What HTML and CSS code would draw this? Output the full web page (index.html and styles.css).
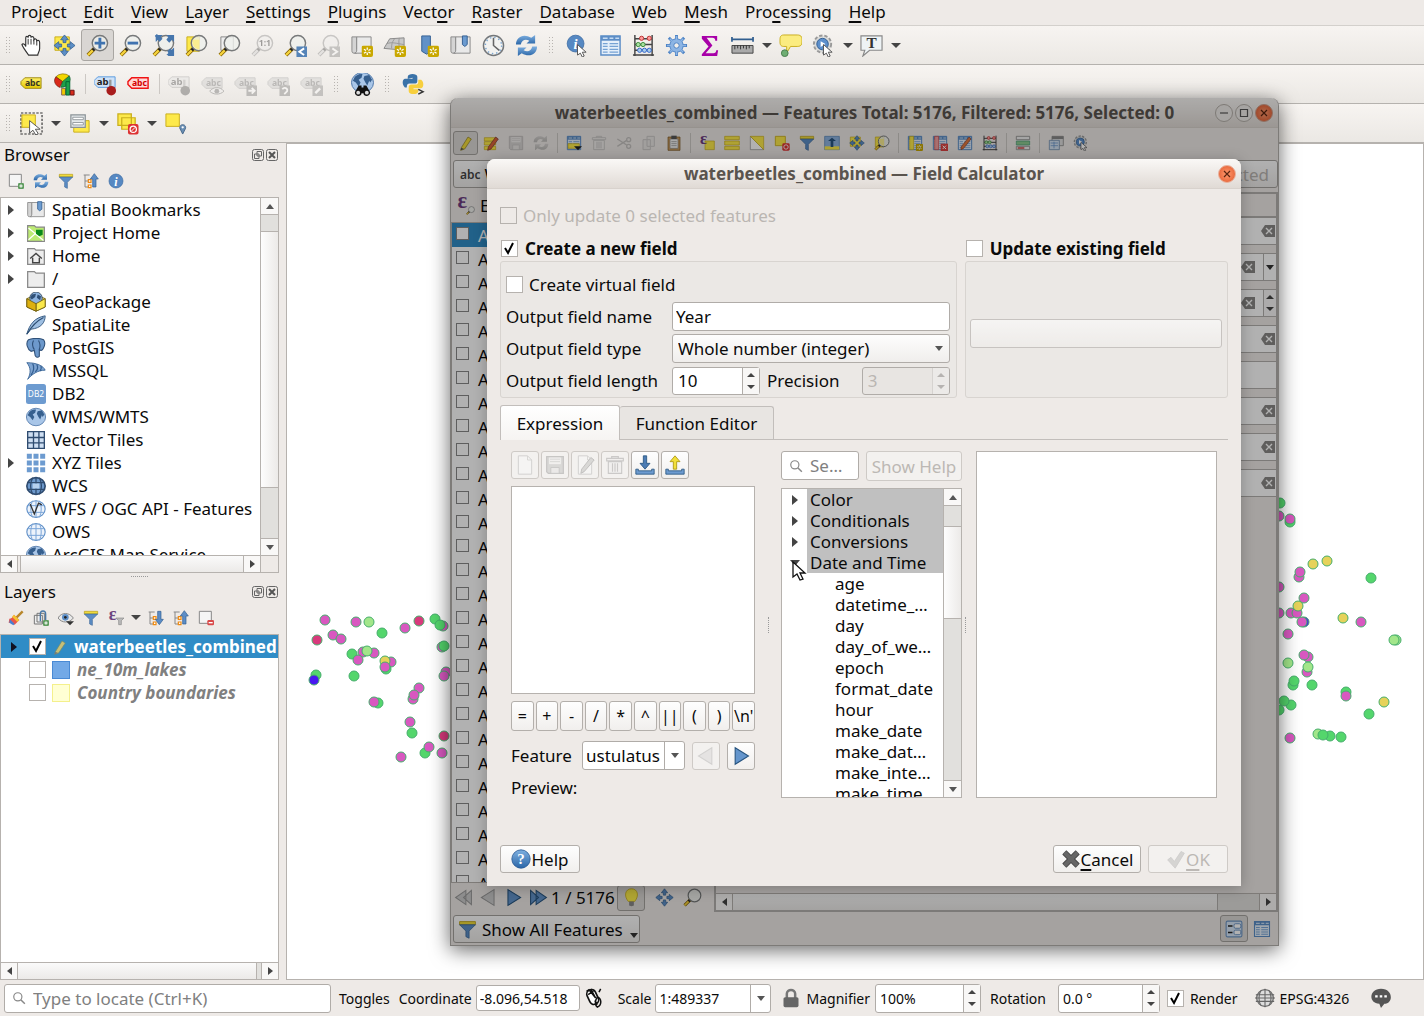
FILE: index.html
```html
<!DOCTYPE html>
<html lang="en">
<head>
<meta charset="utf-8">
<title>QGIS</title>
<link rel="stylesheet" href="styles.css">
</head>
<body>
<svg class="paints" aria-hidden="true">
  <defs>
    <linearGradient id="gold" x1="0" y1="0" x2="0" y2="1"><stop offset="0" stop-color="#fff06a"/><stop offset="1" stop-color="#e3c800"/></linearGradient>
    <linearGradient id="blue" x1="0" y1="0" x2="0" y2="1"><stop offset="0" stop-color="#7fb0e0"/><stop offset="1" stop-color="#2a66a8"/></linearGradient>
    <radialGradient id="orange"><stop offset="0" stop-color="#ff9a70"/><stop offset="1" stop-color="#e8683c"/></radialGradient>
  </defs>
</svg>
<svg class="sprite" aria-hidden="true">
  <symbol id="lens" viewBox="0 0 24 24"><path d="M2 22l7-7" stroke="#7a5a00" stroke-width="4"/><path d="M2 22l6-6" stroke="#f5d23c" stroke-width="2.4"/><path d="M7 17l2.500-2.500" stroke="#222" stroke-width="3"/><circle cx="14.500" cy="9.500" r="8" fill="#eef0ec" fill-opacity=".8" stroke="#77797a" stroke-width="1.500"/></symbol>
  <symbol id="arrows" viewBox="0 0 24 24"><path d="M12 1l4 5h-2.500v3h-3V6H8zM12 23l4-5h-2.500v-3h-3v3H8zM1 12l5-4v2.500h3v3H6V16zM23 12l-5-4v2.500h-3v3h3V16z" fill="#5c8ec6" stroke="#315e8f" stroke-width=".8"/></symbol>
  <symbol id="hand" viewBox="0 0 24 24"><path d="M9 22C6 18 3 14 2 11c1-1.500 3-.5 4 2V4c0-2 2.500-2 2.500 0V3c0-2 3-2 3 0v1c0-2 3-1.500 3 .5V6c1-1.500 3-1 3 1 1.500-1 3 0 3 2v6c0 3-2 5-2 7z" fill="#fff" stroke="#333" stroke-width="1.200"/><path d="M8.500 5v6M11.500 5v6M14.500 6v5M17.500 7v5" stroke="#333" fill="none"/></symbol>
  <symbol id="pan" viewBox="0 0 24 24"><path d="M2 3h15v14H2z" fill="#fde94a" stroke="#c9ae1c"/><use href="#arrows"/></symbol>
  <symbol id="zin" viewBox="0 0 24 24"><use href="#lens"/><path d="M9 9.500h11M14.500 4v11" stroke="#3f73b0" stroke-width="3"/></symbol>
  <symbol id="zout" viewBox="0 0 24 24"><use href="#lens"/><path d="M9 9.500h11" stroke="#3f73b0" stroke-width="3"/></symbol>
  <symbol id="zfull" viewBox="0 0 24 24"><path d="M4 1h7L4 8zM23 1v8l-8-8zM23 22h-8l8-8z" fill="#4676ad"/><path d="M4 1l4 4M22 2l-4 4M22 21l-4-4" stroke="#4676ad" stroke-width="3"/><use href="#lens"/><path d="M4 1h7L9 3l2 2-3 3-2-2-2 2zM23 1v7l-2-2-3 3-3-3 2-3-2-2zM23 23h-7l2-2-2-3 3-3 2 2 2-2z" fill="#4676ad"/></symbol>
  <symbol id="zsel" viewBox="0 0 24 24"><path d="M2 3h13v15H2z" fill="#fde94a" stroke="#c9ae1c"/><use href="#lens"/><path d="M8 6h7v10c-4 0-8-4-7-10z" fill="#fbee90"/></symbol>
  <symbol id="zlay" viewBox="0 0 24 24"><path d="M3 3h13v14H3z" fill="#eee" stroke="#888"/><use href="#lens"/></symbol>
  <symbol id="z11" viewBox="0 0 24 24"><use href="#lens"/><text x="14.500" y="13" font-size="9" font-weight="700" text-anchor="middle">1:1</text></symbol>
  <symbol id="zlast" viewBox="0 0 24 24"><use href="#lens"/><path d="M13 13h11v11H13z" fill="#5584b8"/><path d="M21 15l-5 3.500 5 3.500" stroke="#fff" stroke-width="2" fill="none"/></symbol>
  <symbol id="znext" viewBox="0 0 24 24"><use href="#lens"/><path d="M13 13h11v11H13z" fill="#777"/><path d="M16 15l5 3.500-5 3.500" stroke="#fff" stroke-width="2" fill="none"/></symbol>
  <symbol id="star" viewBox="0 0 12 12"><rect width="12" height="12" rx="2" fill="#c9a800"/><path d="M6 2v8M2.500 4l7 4M9.500 4l-7 4" stroke="#fff" stroke-width="1.300"/><circle cx="6" cy="6" r="1.500" fill="#c9a800"/></symbol>
  <symbol id="map" viewBox="0 0 24 24"><path d="M2 3h5v17H4c-2 0-2-2-2-3z" fill="#d4d4d4" stroke="#888"/><path d="M7 3h15v17H5c2-1 2-2 2-4z" fill="#e9e9e9" stroke="#888"/></symbol>
  <symbol id="newmap" viewBox="0 0 24 24"><use href="#map"/><use href="#star" x="12" y="12" width="12" height="12"/></symbol>
  <symbol id="mesh" viewBox="0 0 24 24"><path d="M1 15L7 5l15-1v13z" fill="#c8c8c8" stroke="#888"/><path d="M4 10c6-2 10 0 18 1M12 5c-3 4-3 6-3 10M17 4c-1 4 0 8 0 12" stroke="#999" fill="none"/><use href="#star" x="12" y="12" width="12" height="12"/></symbol>
  <symbol id="bmnew" viewBox="0 0 24 24"><path d="M6 2h9v17l-4 2-5-3z" fill="#6191c8" stroke="#335f92"/><use href="#star" x="12" y="12" width="12" height="12"/></symbol>
  <symbol id="bm" viewBox="0 0 24 24"><use href="#map"/><path d="M14 2h5v9l-2.500 2-2.500-2z" fill="#6b9bd0" stroke="#335f92"/></symbol>
  <symbol id="clock" viewBox="0 0 24 24"><circle cx="12" cy="12" r="10.500" fill="#f2f2f0" stroke="#74777a" stroke-width="1.500"/><circle cx="12" cy="12" r="8.500" fill="none" stroke="#7ca6d0" stroke-width="1.500" stroke-dasharray="1.500 3"/><path d="M12 4v8l6 5" stroke="#666" stroke-width="1.600" fill="none"/></symbol>
  <symbol id="refresh" viewBox="0 0 24 24"><path d="M1 11C1 3 9-1 17 4l4-3v9h-9l3-3c-4-2-8-1-9 4z" fill="url(#blue)"/><path d="M23 13c0 8-8 12-16 7l-4 3v-9h9l-3 3c4 2 8 1 9-4z" fill="url(#blue)"/></symbol>
  <symbol id="cursor" viewBox="0 0 24 24"><path d="M12 11v11l3-2 2 4 2-1-2-4h4z" fill="#fff" stroke="#555"/></symbol>
  <symbol id="info" viewBox="0 0 24 24"><circle cx="12" cy="12" r="10.500" fill="#5688c2" stroke="#3a6aa2"/><text x="12" y="19" font-size="18" font-style="italic" font-weight="700" text-anchor="middle" font-family="Liberation Serif, serif" fill="#fff">i</text></symbol>
  <symbol id="ident" viewBox="0 0 24 24"><use href="#info" width="20" height="20"/><use href="#cursor"/></symbol>
  <symbol id="table" viewBox="0 0 24 24"><path d="M2 2h20v20H2z" fill="#e5effa" stroke="#5c8dc6" stroke-width="1.500"/><path d="M2 2h20v5H2z" fill="#5c8dc6"/><path d="M4 4.500h5M11 4.500h4M17 4.500h4" stroke="#c5dbf2" stroke-width="1.500"/><path d="M4 10h5M4 13h5M4 16h5M4 19h5M11 10h9M11 13h9M11 16h9M11 19h9" stroke="#76a2d4" stroke-width="1.300"/></symbol>
  <symbol id="abacus" viewBox="0 0 24 24"><path d="M3 1v22M21 1v22M1 22h22M3 5h18M3 11h18M3 17h18" stroke="#444" stroke-width="1.500" fill="none"/><g stroke-width="1"><g fill="#ff9a9a" stroke="#b33"><circle cx="10" cy="4.500" r="2.200"/><circle cx="18" cy="4.500" r="2.200"/></g><g fill="#a8e0a0" stroke="#3a8a3a"><circle cx="6.500" cy="11" r="2.200"/><circle cx="11.500" cy="11" r="2.200"/></g><g fill="#a8cce8" stroke="#36c"><circle cx="8" cy="17" r="2.200"/><circle cx="13" cy="17" r="2.200"/><circle cx="18" cy="17" r="2.200"/></g></g></symbol>
  <symbol id="gear" viewBox="0 0 24 24"><path d="M12 1v22M1 12h22M4 4l16 16M20 4L4 20" stroke="#4c82c4" stroke-width="3"/><circle cx="12" cy="12" r="7" fill="#8db5e4" stroke="#4c82c4"/><path d="M12 2v20M2 12h20M5 5l14 14M19 5L5 19" stroke="#8db5e4" stroke-width="1.600"/><circle cx="12" cy="12" r="2.800" fill="#f1eeea" stroke="#4c82c4"/></symbol>
  <symbol id="sigma" viewBox="0 0 24 24"><path d="M4 2h16v5h-2c0-2-1-3-3-3H9l6 8-7 8h8c2 0 3-1 3-3h2l-1 6H4v-2l7-8-7-8z" fill="#a800a8"/></symbol>
  <symbol id="measure" viewBox="0 0 24 24"><path d="M1 5.500h22M1 3v5M23 3v5" stroke="#315e8f" stroke-width="1.800"/><path d="M1 12h22v8H1z" fill="#aaa" stroke="#444"/><path d="M4 12v4M7 12v3M10 12v4M13 12v3M16 12v4M19 12v3" stroke="#333"/></symbol>
  <symbol id="tip" viewBox="0 0 24 24"><path d="M5 1h14c5 0 5 3 5 6s0 6-5 6h-7l-4 7v-7H5c-4 0-4-3-4-6s0-6 4-6z" fill="#fbec80" stroke="#c9ae1c"/><circle cx="6" cy="20" r="3.500" fill="#6fae73" stroke="#4a7c4e"/></symbol>
  <symbol id="action" viewBox="0 0 24 24"><circle cx="11" cy="10.500" r="9" fill="#dcdcda" stroke="#999" stroke-width="2" stroke-dasharray="3.500 2"/><circle cx="11" cy="10.500" r="6" fill="#5c8fcc" stroke="#335f92"/><path d="M9 7.500l5 3-5 3z" fill="#fff"/><use href="#cursor"/></symbol>
  <symbol id="text" viewBox="0 0 24 24"><path d="M1 2h22v15H10l-7 6 2-6H1z" fill="#eef3f5" stroke="#888" stroke-width="1.200"/><text x="12" y="15" font-size="16" font-weight="700" text-anchor="middle" font-family="Liberation Serif, serif" fill="#333">T</text></symbol>
  <symbol id="label" viewBox="0 0 24 24"><path d="M5 5h17v11H5l-4-4V9z" fill="url(#gold)" stroke="#a08a10"/><text x="13" y="13.500" font-size="9" font-weight="700" text-anchor="middle" fill="#332">abc</text></symbol>
  <symbol id="labelpin" viewBox="0 0 24 24"><path d="M4 4h18v11H4l-4-4V8z" fill="#cfe2f7" stroke="#5a9be0"/><text x="9" y="13" font-size="10" font-weight="700" text-anchor="middle" fill="#222">ab</text><path d="M17 7v8" stroke="#999" stroke-width="2.500"/><circle cx="18" cy="18.500" r="5" fill="#a81c1c"/></symbol>
  <symbol id="labelred" viewBox="0 0 24 24"><path d="M5 5h17v11H5l-4-4V9z" fill="#ffd9d9" stroke="#f01414" stroke-width="1.500"/><text x="13" y="13.500" font-size="9" font-weight="700" text-anchor="middle" fill="#d40000">abc</text></symbol>
  <symbol id="lgrey" viewBox="0 0 24 24"><path d="M5 5h17v11H5l-4-4V9z" fill="#c8c8a8" stroke="#999980"/><text x="13" y="14" font-size="9" font-weight="700" text-anchor="middle" fill="#555">abc</text></symbol>
  <symbol id="leye" viewBox="0 0 24 24"><use href="#lgrey"/><path d="M9 19c4-5 11-5 15 0-4 4-11 4-15 0z" fill="#eee" stroke="#555"/><circle cx="16.500" cy="19" r="2.500" fill="#555"/></symbol>
  <symbol id="lmove" viewBox="0 0 24 24"><use href="#lgrey"/><path d="M13 13h11v11H13z" fill="#666"/><path d="M15 18.500h6M18.500 15.500l3 3-3 3" stroke="#fff" stroke-width="2" fill="none"/></symbol>
  <symbol id="lrot" viewBox="0 0 24 24"><use href="#lgrey"/><path d="M13 13h11v11H13z" fill="#666"/><path d="M16 17c2-3 6-1 5 2l-3 3" stroke="#fff" stroke-width="1.800" fill="none"/></symbol>
  <symbol id="ledit" viewBox="0 0 24 24"><use href="#lgrey"/><path d="M13 13h11v11H13z" fill="#776"/><path d="M16 21l5-5" stroke="#fff" stroke-width="2.500"/></symbol>
  <symbol id="diagram" viewBox="0 0 24 24"><path d="M10 9L3 4a9 7 0 0 1 14-1z" fill="#f2d600" stroke="#6b5a00" stroke-width=".6"/><path d="M10 9L3 4c-3 4-1 9 4 11z" fill="#d82a1a" stroke="#5a1000" stroke-width=".6"/><path d="M10 9l7-6c3 5-1 12-9 12z" fill="#1da04a" stroke="#0b5020" stroke-width=".6"/><path d="M9 16h4v7H9z" fill="#f2c800" stroke="#865"/><path d="M13.500 9h4v14h-4z" fill="#1da04a" stroke="#063"/><path d="M18 18h4v5h-4z" fill="#d82a1a" stroke="#611"/></symbol>
  <symbol id="globe" viewBox="0 0 24 24"><ellipse cx="12" cy="12" rx="11.500" ry="10.500" fill="#a9c6e8" stroke="#4f77a8"/><path d="M4 6c3-3 6-3 8-3l-1 4-3 2 2 3-2 4-3-4-3-2zM14 5l5-1 3 5-2 3-1-2-2 5-2-3-2-4z" fill="#365f8e"/></symbol>
  <symbol id="binoc" viewBox="0 0 24 24"><use href="#globe" y="-2"/><path d="M8 13h3v2h2v-2h3l4 7c0 5-7 5-7 1h-2c0 4-7 4-7-1z" fill="#111"/><circle cx="7.500" cy="20.500" r="2" fill="#ddd"/><circle cx="16.500" cy="20.500" r="2" fill="#ddd"/></symbol>
  <symbol id="python" viewBox="0 0 24 24"><path d="M6 6V4c0-4 10-4 10 0v4c0 3-2 3-4 3H8c-2 0-3 1-3 4H3c-3-3-3-8 0-9h8V5z" fill="#3a72a8"/><path d="M17 7h3c3 2 3 8 0 9h-8v1h5v2c0 4-10 4-10 0v-4c0-2 1-3 3-3h4c2 0 3-1 3-3z" fill="#f7cf3e"/><path d="M17 17l5 2.500-5 2.500" stroke="#333" stroke-width="1.500" fill="none"/></symbol>
  <symbol id="select" viewBox="0 0 24 24"><path d="M1 1h22v22H1z" fill="none" stroke="#333" stroke-width="1.200" stroke-dasharray="2.500 1.500"/><path d="M2 3h14v13H2z" fill="#fde94a" stroke="#c9ae1c"/><path d="M10 9v13l3.500-3 3 5 2.500-1.500-3-4.500h5z" fill="#fff" stroke="#555"/></symbol>
  <symbol id="selform" viewBox="0 0 24 24"><path d="M6 9h16v12H6z" fill="#fde94a" stroke="#c9ae1c"/><path d="M3 3h15v13H3z" fill="#e4e8ea" stroke="#8a9296" stroke-width="1.300"/><path d="M5 5.500h11v2.500H5zM5 11h11v2.500H5z" fill="#fff" stroke="#8a9296" stroke-width=".9"/></symbol>
  <symbol id="desel" viewBox="0 0 24 24"><path d="M2 2h14v12H2zM6 6h14v12H6z" fill="#fde94a" stroke="#c9ae1c" stroke-width="1.300"/><rect x="12.500" y="12.500" width="11" height="11" rx="2" fill="#d33"/><circle cx="18" cy="18" r="3.300" fill="none" stroke="#fff" stroke-width="1.300"/><path d="M16 20l4-4" stroke="#fff"/></symbol>
  <symbol id="selloc" viewBox="0 0 24 24"><path d="M2 2h14v13H2z" fill="#fde94a" stroke="#c9ae1c"/><path d="M19.500 23l-3-6c-1-5 7-5 6 0z" fill="#6a8fb4" stroke="#48698a"/><circle cx="19.500" cy="16" r="1.200" fill="#fff"/></symbol>
  <symbol id="addlay" viewBox="0 0 24 24"><path d="M2 2h18v18H2z" fill="#f5f5f5" stroke="#888" stroke-width="1.500"/><rect x="15" y="15" width="9" height="9" rx="2" fill="#5f9c5f"/><path d="M19.500 17v5M17 19.500h5" stroke="#fff" stroke-width="1.500"/></symbol>
  <symbol id="remlay" viewBox="0 0 24 24"><path d="M2 2h18v18H2z" fill="#f5f5f5" stroke="#888" stroke-width="1.500"/><rect x="14" y="15" width="10" height="8" rx="2" fill="#d84848"/><path d="M16 19h6" stroke="#fff" stroke-width="2"/></symbol>
  <symbol id="funnel" viewBox="0 0 24 24"><path d="M2 2h20v4H2z" fill="#f0dc3a" stroke="#b89c10"/><path d="M2 6h20l-8 8v9l-4-2v-7z" fill="#5c8dc6" stroke="#3c6898"/></symbol>
  <symbol id="collapse" viewBox="0 0 24 24"><path d="M1 3h9M3 3v18h6M3 12h5" stroke="#888" stroke-width="1.500" fill="none"/><path d="M8 10h4v4H8zM8 18h4v4H8z" fill="#fff" stroke="#f08a10" stroke-width="1.800"/><path d="M17 1l6 8h-3.500v12h-5V9H11z" fill="#5c8dc6" stroke="#315e8f"/></symbol>
  <symbol id="expand" viewBox="0 0 24 24"><path d="M1 3h9M3 3v18h6M3 12h5" stroke="#888" stroke-width="1.500" fill="none"/><path d="M8 10h4v4H8zM8 18h4v4H8z" fill="#fff" stroke="#f08a10" stroke-width="1.800"/><path d="M17 22l6-8h-3.500V2h-5v12H11z" fill="#5c8dc6" stroke="#315e8f"/></symbol>
  <symbol id="brush" viewBox="0 0 24 24"><path d="M13 11l9-9" stroke="#b8862a" stroke-width="3.500"/><path d="M9 7l8 8-7 7c-2-2-6-3-9-3l1-6c3 0 5-2 7-6z" fill="#e9564a"/><path d="M9 7l8 8-3 3-8-8z" fill="#f4c430"/><path d="M3 14l7 7-2 2-6-4z" fill="#4a7fd0"/></symbol>
  <symbol id="group" viewBox="0 0 24 24"><path d="M2 8h12v13H2zM6 5h11v13H6z" fill="#eee" stroke="#777" stroke-width="1.500"/><path d="M11 17V6c0-6 8-6 8 0v13" fill="none" stroke="#4a78a8" stroke-width="2"/><rect x="15" y="15" width="9" height="9" rx="2" fill="#5f9c5f"/><path d="M19.500 17v5M17 19.500h5" stroke="#fff" stroke-width="1.500"/></symbol>
  <symbol id="eye" viewBox="0 0 24 24"><path d="M0 12c5-9 17-9 23 0-6 8-17 8-23 0z" fill="#e8e8e8" stroke="#888" stroke-width="1.500"/><circle cx="11" cy="11" r="5" fill="#5c8dc6"/><circle cx="11" cy="11" r="2" fill="#222"/><path d="M12 17h12l-6 6z" fill="#333"/></symbol>
  <symbol id="eps" viewBox="0 0 24 24"><text x="7" y="15" font-size="27" font-weight="700" text-anchor="middle" fill="#6d4580" font-family="Liberation Serif, serif">ε</text><path d="M12 12h12l-4 4v6h-4v-6z" fill="#bbb" stroke="#888"/></symbol>
  <symbol id="epslens" viewBox="0 0 24 24"><text x="7" y="15" font-size="30" font-weight="700" text-anchor="middle" fill="#6d3d80" font-family="Liberation Serif, serif">ε</text><use href="#lens" x="12" y="12" width="12" height="12"/></symbol>
  <symbol id="epssel" viewBox="0 0 24 24"><path d="M9 9h14v13H9z" fill="#fde94a" stroke="#c9ae1c"/><text x="7" y="14" font-size="25" font-weight="700" text-anchor="middle" fill="#6d3d80" font-family="Liberation Serif, serif">ε</text></symbol>
  <symbol id="home" viewBox="0 0 24 24"><path d="M2 3h8l2 2h10v17H2z" fill="#ededed" stroke="#888" stroke-width="1.500"/><path d="M5 15l7-6 7 6M8 14v6h8v-6" fill="none" stroke="#444" stroke-width="1.700"/></symbol>
  <symbol id="folder" viewBox="0 0 24 24"><path d="M2 3h8l2 2h10v17H2z" fill="#ededed" stroke="#888" stroke-width="1.500"/></symbol>
  <symbol id="phome" viewBox="0 0 24 24"><path d="M2 3h8l2 2h10v17H2z" fill="#bdea74" stroke="#888" stroke-width="1.500"/><path d="M3 6l18 15M3 20l9-8" stroke="#fff" stroke-width="1.500"/><path d="M12 8h8v6l-4 2-4-3z" fill="#0a8a1a"/></symbol>
  <symbol id="gpkg" viewBox="0 0 24 24"><path d="M1 8l11-5 11 5v10l-11 5-11-5z" fill="#f7dd5a" stroke="#6b5a10"/><circle cx="12" cy="7.500" r="7.500" fill="#8db3df" stroke="#345"/><path d="M7 3l5-1-1 4-4 3-2-2zM14 3l4 2-1 5-4-3z" fill="#2f5078"/><path d="M12 14v9l11-5V8z" fill="#fbe84a" stroke="#6b5a10"/><path d="M12 14v9L1 18V8z" fill="#ddb010" stroke="#6b5a10"/></symbol>
  <symbol id="feather" viewBox="0 0 24 24"><path d="M1 23C4 12 10 3 23 1c0 8-5 15-17 16z" fill="#9ebfe2" stroke="#3c5f86" stroke-width="1.200"/><path d="M1 23C7 13 13 7 21 3" stroke="#2c4c70" fill="none" stroke-width="1.400"/></symbol>
  <symbol id="elephant" viewBox="0 0 24 24"><path d="M3 2c5-2 14-2 18 0 4 5-1 13-3 13l-2-1v8c-2 2-4 1-5-1l-1-6-4 1C2 14-1 6 3 2z" fill="#6d99cc" stroke="#2f5078" stroke-width="1.300"/><path d="M9 3c-2 4-1 8 1 11M15 3c3 5 2 8 1 11" fill="none" stroke="#2f5078" stroke-width="1.300"/></symbol>
  <symbol id="mssql" viewBox="0 0 24 24"><path d="M1 2c12 0 20 4 22 9-9 0-16 5-21 11 4-7 4-14-1-20z" fill="#7fa5d2" stroke="#335f92"/><path d="M8 3c3 6 1 10-2 14M13 4c2 5 1 7-2 9M18 6c1 3 0 4-1 6" fill="none" stroke="#335f92" stroke-width="1.500"/></symbol>
  <symbol id="db2" viewBox="0 0 24 24"><rect width="24" height="24" rx="3" fill="#6d9bd0"/><text x="12" y="15" font-size="10" text-anchor="middle" fill="#fff">DB2</text></symbol>
  <symbol id="vtiles" viewBox="0 0 24 24"><path d="M2 2h20v20H2z" fill="#cfdff2"/><path d="M2 2h20v20H2zM2 9h20M2 15.500h20M9 2v20M15.500 2v20" fill="none" stroke="#2f4c70" stroke-width="1.600"/></symbol>
  <symbol id="xyz" viewBox="0 0 24 24"><path d="M1 1h6v6H1zM9 1h6v6H9zM17 1h6v6h-6zM1 9h6v6H1zM9 9h6v6H9zM17 9h6v6h-6zM1 17h6v6H1zM9 17h6v6H9zM17 17h6v6h-6z" fill="#6d9bd0"/></symbol>
  <symbol id="wcs" viewBox="0 0 24 24"><ellipse cx="12" cy="12" rx="11" ry="10" fill="#6d99cc" stroke="#2f4c70" stroke-width="2"/><path d="M2 8h20M2 16h20M12 2v20M8 2c-3 6-3 14 0 20M16 2c3 6 3 14 0 20" fill="none" stroke="#2f4c70" stroke-width="1.500"/><path d="M8 9h8v6H8z" fill="#b5d0ee"/></symbol>
  <symbol id="ows" viewBox="0 0 24 24"><ellipse cx="12" cy="12" rx="11" ry="10" fill="#edf3fb" stroke="#5c8dc6" stroke-width="1.300"/><path d="M2 8h20M2 16h20M12 2v20M8 2c-3 6-3 14 0 20M16 2c3 6 3 14 0 20" fill="none" stroke="#7ba5d8" stroke-width="1.200"/></symbol>
  <symbol id="wfs" viewBox="0 0 24 24"><use href="#ows"/><path d="M5 6l5 12 5-13 4 2" fill="none" stroke="#333" stroke-width="1.600"/></symbol>
  <symbol id="pencil" viewBox="0 0 24 24"><path d="M5 19L15 3l5 3L10 21l-6 2z" fill="#f2dc3c" stroke="#8a7a20"/><path d="M4 23l1-4 4 2z" fill="#555"/></symbol>
  <symbol id="layerpencil" viewBox="0 0 24 24"><path d="M5 19L15 3l5 3L10 21l-6 2z" fill="#c6bf78" stroke="#6f8a6a"/><path d="M4 23l1-4 4 2z" fill="#777"/></symbol>
  <symbol id="multi" viewBox="0 0 24 24"><path d="M2 4h17v5H2zM2 10h17v5H2zM2 17h17v5H2z" fill="#fde94a" stroke="#c9ae1c"/><path d="M8 18L19 3l4 3-11 15-5 2z" fill="#d8643c" stroke="#733"/></symbol>
  <symbol id="save" viewBox="0 0 24 24"><path d="M2 2h20v20H4l-2-2z" fill="#aaa" stroke="#777" stroke-width="1.500"/><path d="M5 3h14v8H5z" fill="#eee"/><path d="M7 15h10v7H7z" fill="#ddd" stroke="#777"/><path d="M6 5h12M6 8h12" stroke="#999"/></symbol>
  <symbol id="tabadd" viewBox="0 0 24 24"><use href="#table"/><path d="M3 13h17v7H3z" fill="#fde94a" stroke="#c9ae1c"/><path d="M12 17h12l-6 6z" fill="#222"/></symbol>
  <symbol id="trash" viewBox="0 0 24 24"><path d="M2 4h20v3H2zM8 4V2h8v2M4 8h16v14H4zM9 10v10M12 10v10M15 10v10" fill="#f4eded" stroke="#a77" stroke-width="1.400"/></symbol>
  <symbol id="cut" viewBox="0 0 24 24"><path d="M2 6l14 9M2 17l14-9" stroke="#777" stroke-width="2"/><circle cx="19" cy="7" r="3" fill="none" stroke="#777" stroke-width="2"/><circle cx="19" cy="17" r="3" fill="none" stroke="#777" stroke-width="2"/></symbol>
  <symbol id="copy" viewBox="0 0 24 24"><path d="M3 7h11v15H3zM9 2h11v15H9z" fill="#ddd" stroke="#888" stroke-width="1.500"/></symbol>
  <symbol id="paste" viewBox="0 0 24 24"><path d="M3 3h18v20H3z" fill="#c99b60" stroke="#7a5520"/><path d="M6 6h12v14H6z" fill="#f4f4f4" stroke="#888"/><path d="M8 1h8v5H8z" fill="#555"/><path d="M8 10h8M8 13h8M8 16h8" stroke="#888"/></symbol>
  <symbol id="selall" viewBox="0 0 24 24"><path d="M1 2h22v5H1zM1 9h22v6H1zM1 17h22v5H1z" fill="#fde94a" stroke="#c9ae1c"/></symbol>
  <symbol id="invert" viewBox="0 0 24 24"><path d="M2 2v20h20z" fill="#fff" stroke="#888"/><path d="M2 2h20v20z" fill="#fde94a" stroke="#c9ae1c"/></symbol>
  <symbol id="desel1" viewBox="0 0 24 24"><path d="M2 2h15v14H2z" fill="#fde94a" stroke="#c9ae1c" stroke-width="1.300"/><rect x="12.500" y="12.500" width="11" height="11" rx="2" fill="#d33"/><circle cx="18" cy="18" r="3.300" fill="none" stroke="#fff" stroke-width="1.300"/></symbol>
  <symbol id="totop" viewBox="0 0 24 24"><path d="M1 2h22v20H1z" fill="#8db3df" stroke="#4c7cb4"/><path d="M1 17h22v5H1z" fill="#fde94a"/><path d="M12 4l6 5h-4v9h-4V9H6z" fill="#27547f"/></symbol>
  <symbol id="colnew" viewBox="0 0 24 24"><use href="#table"/><path d="M4 2h6v20H4z" fill="#fde94a" stroke="#c9ae1c"/><use href="#star" x="13" y="13" width="11" height="11"/></symbol>
  <symbol id="coldel" viewBox="0 0 24 24"><use href="#table"/><path d="M4 2h6v20H4z" fill="#f4a0a0" stroke="#c44"/><path d="M13 13h11v11H13z" fill="#d44"/><path d="M16 16l5 5M21 16l-5 5" stroke="#fff" stroke-width="1.500"/></symbol>
  <symbol id="coledit" viewBox="0 0 24 24"><use href="#table"/><path d="M6 18L18 3l3 3L10 20l-4 2z" fill="#e07840" stroke="#843"/></symbol>
  <symbol id="cond" viewBox="0 0 24 24"><path d="M2 2h20v5H2zM2 17h20v5H2z" fill="#eee" stroke="#777"/><path d="M2 9h20v6H2z" fill="#8cc890" stroke="#497"/><path d="M4 19.500h10" stroke="#c33" stroke-width="2"/></symbol>
  <symbol id="dock" viewBox="0 0 24 24"><path d="M6 2h17v14H6z" fill="#ddd" stroke="#777"/><path d="M6 2h17v4H6z" fill="#888"/><path d="M2 8h15v14H2z" fill="#d4e2f2" stroke="#5c7da6"/><path d="M4 12h11M4 16h11M9 10v10" stroke="#5c8dc6"/></symbol>
  <symbol id="form" viewBox="0 0 24 24"><rect x="1.500" y="1.500" width="21" height="21" rx="2" fill="#d6e5f6" stroke="#6d95c4" stroke-width="1.500"/><path d="M4 8h6M4 16.500h6" stroke="#222" stroke-width="2"/><rect x="12" y="5" width="9" height="6" rx="2" fill="#fff" stroke="#4c7cb4"/><rect x="12" y="13.500" width="9" height="6" rx="2" fill="#fff" stroke="#4c7cb4"/></symbol>
  <symbol id="page" viewBox="0 0 24 24"><path d="M4 1h11l5 5v17H4z" fill="#fbfbfb" stroke="#999" stroke-width="1.200"/><path d="M15 1v5h5" fill="none" stroke="#999"/></symbol>
  <symbol id="pageedit" viewBox="0 0 24 24"><use href="#page"/><path d="M8 17L19 3l4 3-12 14-4 2z" fill="#aaa" stroke="#555"/></symbol>
  <symbol id="import" viewBox="0 0 24 24"><path d="M10 1h4v9h4l-6 7-6-7h4z" fill="#4c7cb4" stroke="#27547f"/><path d="M1 17v6h22v-6h-3v2H4v-2z" fill="#6d9bd0" stroke="#27547f"/></symbol>
  <symbol id="export" viewBox="0 0 24 24"><path d="M10 17h4V8h4l-6-7-6 7h4z" fill="#f2e03a" stroke="#a8920c"/><path d="M1 17v6h22v-6h-3v2H4v-2z" fill="#6d9bd0" stroke="#27547f"/></symbol>
  <symbol id="next" viewBox="0 0 24 24"><path d="M5 2l16 10L5 22z" fill="#6495cc" stroke="#27547f" stroke-width="1.300"/></symbol>
  <symbol id="prev" viewBox="0 0 24 24"><path d="M19 2L3 12l16 10z" fill="#ccc" stroke="#999" stroke-width="1.300"/></symbol>
  <symbol id="last" viewBox="0 0 24 24"><path d="M2 3l10 9-10 9zM9 3l13 9-13 9z" fill="#6495cc" stroke="#27547f" stroke-width="1.300"/></symbol>
  <symbol id="first" viewBox="0 0 24 24"><path d="M22 3l-10 9 10 9zM15 3L2 12l13 9z" fill="#ccc" stroke="#999" stroke-width="1.300"/></symbol>
  <symbol id="bulb" viewBox="0 0 24 24"><path d="M8 17C2 10 4 1 12 1s10 9 4 16z" fill="#fff04a" stroke="#c9ae1c"/><path d="M9 17h6v5l-3 1-3-1z" fill="#888"/></symbol>
  <symbol id="search" viewBox="0 0 24 24"><circle cx="10" cy="10" r="7" fill="none" stroke="#888" stroke-width="2"/><path d="M15 15l7 7" stroke="#888" stroke-width="2.500"/></symbol>
  <symbol id="helpq" viewBox="0 0 24 24"><circle cx="12" cy="12" r="11" fill="url(#blue)" stroke="#2a5c96"/><text x="12" y="18.500" font-size="18" font-weight="700" text-anchor="middle" font-family="Liberation Serif, serif" fill="#fff">?</text></symbol>
  <symbol id="cross" viewBox="0 0 24 24"><path d="M4 4l16 16M20 4L4 20" stroke="#444" stroke-width="7"/><path d="M4 4l16 16M20 4L4 20" stroke="#666" stroke-width="5"/></symbol>
  <symbol id="ok" viewBox="0 0 24 24"><path d="M2 13l4-3 4 5 8-12 4 2-11 18z" fill="#a0a18c" stroke="#888"/></symbol>
  <symbol id="clear" viewBox="0 0 14 12"><path d="M4 0h10v12H4L0 6z" fill="#8a8886"/><path d="M5 3l6 6M11 3l-6 6" stroke="#fff" stroke-width="1.400"/></symbol>
  <symbol id="lock" viewBox="0 0 24 24"><path d="M7 12V7c0-6 10-6 10 0v5" fill="none" stroke="#777" stroke-width="3"/><rect x="3" y="11" width="18" height="12" rx="2" fill="#666"/></symbol>
  <symbol id="extents" viewBox="0 0 24 24"><rect x="5" y="2" width="11" height="18" rx="5" transform="rotate(-25 10 11)" fill="#fff" stroke="#111" stroke-width="2"/><path d="M3 4l3-2 8 10M8 1l6 11M5 8l7-5M16 11c5 1 6 9 0 12-3-2-3-8 0-12zM20 1l-2 4M13 15l3 5" fill="none" stroke="#111" stroke-width="1.800"/></symbol>
  <symbol id="crs" viewBox="0 0 24 24"><circle cx="12" cy="12" r="10" fill="#ddd" stroke="#666" stroke-width="1.500"/><path d="M1 8h22M1 16h22M0 12h24M12 1v22M7 3c-3 6-3 12 0 18M17 3c3 6 3 12 0 18" fill="none" stroke="#666" stroke-width="1.300"/></symbol>
  <symbol id="bubble" viewBox="0 0 24 24"><path d="M12 1c15 0 15 18 4 18l-4 5-2-5C-4 18-2 1 12 1z" fill="#555"/><path d="M5 10h3M10.500 10h3M16 10h3" stroke="#fff" stroke-width="2.500"/></symbol>
  <symbol id="float" viewBox="0 0 12 12"><rect x=".5" y=".5" width="11" height="11" rx="2" fill="none" stroke="#666"/><path d="M5 2.500h4.500V7H5zM2.500 5H7v4.500H2.500z" fill="none" stroke="#666"/></symbol>
  <symbol id="closebox" viewBox="0 0 12 12"><rect x=".5" y=".5" width="11" height="11" rx="2" fill="none" stroke="#666"/><path d="M3 3l6 6M9 3l-6 6" stroke="#555" stroke-width="2"/></symbol>
</svg>

<div class="app">
  <nav class="menubar">
    <button>Pro<u>j</u>ect</button><button><u>E</u>dit</button><button><u>V</u>iew</button><button><u>L</u>ayer</button><button><u>S</u>ettings</button><button><u>P</u>lugins</button><button>Vect<u>o</u>r</button><button><u>R</u>aster</button><button><u>D</u>atabase</button><button><u>W</u>eb</button><button><u>M</u>esh</button><button>Pro<u>c</u>essing</button><button><u>H</u>elp</button>
  </nav>

  <div class="toolbar">
    <i class="grip"></i>
    <button class="tool"><svg><use href="#hand"/></svg></button>
    <button class="tool"><svg><use href="#pan"/></svg></button>
    <button class="tool on"><svg><use href="#zin"/></svg></button>
    <button class="tool"><svg><use href="#zout"/></svg></button>
    <button class="tool"><svg><use href="#zfull"/></svg></button>
    <button class="tool"><svg><use href="#zsel"/></svg></button>
    <button class="tool"><svg><use href="#zlay"/></svg></button>
    <button class="tool" disabled><svg><use href="#z11"/></svg></button>
    <button class="tool"><svg><use href="#zlast"/></svg></button>
    <button class="tool" disabled><svg><use href="#znext"/></svg></button>
    <button class="tool"><svg><use href="#newmap"/></svg></button>
    <button class="tool"><svg><use href="#mesh"/></svg></button>
    <button class="tool"><svg><use href="#bmnew"/></svg></button>
    <button class="tool"><svg><use href="#bm"/></svg></button>
    <button class="tool"><svg><use href="#clock"/></svg></button>
    <button class="tool"><svg><use href="#refresh"/></svg></button>
    <i class="grip"></i>
    <button class="tool"><svg><use href="#ident"/></svg></button>
    <button class="tool"><svg><use href="#table"/></svg></button>
    <button class="tool"><svg><use href="#abacus"/></svg></button>
    <button class="tool"><svg><use href="#gear"/></svg></button>
    <button class="tool"><svg><use href="#sigma"/></svg></button>
    <button class="tool"><svg><use href="#measure"/></svg></button>
    <button class="drop"></button>
    <button class="tool"><svg><use href="#tip"/></svg></button>
    <button class="tool"><svg><use href="#action"/></svg></button>
    <button class="drop"></button>
    <button class="tool"><svg><use href="#text"/></svg></button>
    <button class="drop"></button>
  </div>
  <div class="toolbar">
    <i class="grip"></i>
    <button class="tool"><svg><use href="#label"/></svg></button>
    <button class="tool"><svg><use href="#diagram"/></svg></button>
    <i class="sep"></i>
    <button class="tool"><svg><use href="#labelpin"/></svg></button>
    <button class="tool"><svg><use href="#labelred"/></svg></button>
    <i class="sep"></i>
    <button class="tool" disabled><svg><use href="#labelpin"/></svg></button>
    <button class="tool" disabled><svg><use href="#leye"/></svg></button>
    <button class="tool" disabled><svg><use href="#lmove"/></svg></button>
    <button class="tool" disabled><svg><use href="#lrot"/></svg></button>
    <button class="tool" disabled><svg><use href="#ledit"/></svg></button>
    <i class="grip"></i>
    <button class="tool"><svg><use href="#binoc"/></svg></button>
    <i class="grip"></i>
    <button class="tool"><svg><use href="#python"/></svg></button>
  </div>
  <div class="toolbar">
    <i class="grip"></i>
    <button class="tool"><svg><use href="#select"/></svg></button>
    <button class="drop"></button>
    <button class="tool"><svg><use href="#selform"/></svg></button>
    <button class="drop"></button>
    <button class="tool"><svg><use href="#desel"/></svg></button>
    <button class="drop"></button>
    <button class="tool"><svg><use href="#selloc"/></svg></button>
  </div>

  <main class="workspace">
    <aside class="docks">
      <section class="dock browser">
        <header class="dock-title"><h2>Browser</h2><svg><use href="#float"/></svg><svg><use href="#closebox"/></svg></header>
        <div class="dock-tools">
          <button><svg><use href="#addlay"/></svg></button><button><svg><use href="#refresh"/></svg></button><button><svg><use href="#funnel"/></svg></button><button><svg><use href="#collapse"/></svg></button><button><svg><use href="#info"/></svg></button>
        </div>
        <div class="pane">
          <div class="pane-row">
            <ul class="tree">
              <li><b class="tri"></b><svg><use href="#bm"/></svg>Spatial Bookmarks</li>
              <li><b class="tri"></b><svg><use href="#phome"/></svg>Project Home</li>
              <li><b class="tri"></b><svg><use href="#home"/></svg>Home</li>
              <li><b class="tri"></b><svg><use href="#folder"/></svg>/</li>
              <li><b class="tri none"></b><svg><use href="#gpkg"/></svg>GeoPackage</li>
              <li><b class="tri none"></b><svg><use href="#feather"/></svg>SpatiaLite</li>
              <li><b class="tri none"></b><svg><use href="#elephant"/></svg>PostGIS</li>
              <li><b class="tri none"></b><svg><use href="#mssql"/></svg>MSSQL</li>
              <li><b class="tri none"></b><svg><use href="#db2"/></svg>DB2</li>
              <li><b class="tri none"></b><svg><use href="#globe"/></svg>WMS/WMTS</li>
              <li><b class="tri none"></b><svg><use href="#vtiles"/></svg>Vector Tiles</li>
              <li><b class="tri"></b><svg><use href="#xyz"/></svg>XYZ Tiles</li>
              <li><b class="tri none"></b><svg><use href="#wcs"/></svg>WCS</li>
              <li><b class="tri none"></b><svg><use href="#wfs"/></svg>WFS / OGC API - Features</li>
              <li><b class="tri none"></b><svg><use href="#ows"/></svg>OWS</li>
              <li><b class="tri none"></b><svg><use href="#globe"/></svg>ArcGIS Map Service</li>
            </ul>
            <div class="vbar"><i class="up"></i><i class="thumb browser-thumb"></i><i class="down"></i></div>
          </div>
          <div class="hbar with-corner"><i class="left"></i><i class="thumb"></i><i class="right"></i></div>
        </div>
      </section>
      <div class="split-h"></div>
      <section class="dock layers">
        <header class="dock-title"><h2>Layers</h2><svg><use href="#float"/></svg><svg><use href="#closebox"/></svg></header>
        <div class="dock-tools">
          <button><svg><use href="#brush"/></svg></button><button><svg><use href="#group"/></svg></button><button><svg><use href="#eye"/></svg></button><button><svg><use href="#funnel"/></svg></button><button><svg><use href="#eps"/></svg></button><button class="drop"></button><button><svg><use href="#expand"/></svg></button><button><svg><use href="#collapse"/></svg></button><button><svg><use href="#remlay"/></svg></button>
        </div>
        <div class="pane">
          <div class="pane-row">
            <ul class="layer-list">
              <li class="selected"><b class="tri"></b><input type="checkbox" id="l1" checked><svg><use href="#layerpencil"/></svg><label for="l1">waterbeetles_combined</label></li>
              <li><b class="tri none"></b><input type="checkbox" id="l2"><i class="swatch lakes"></i><label for="l2">ne_10m_lakes</label></li>
              <li><b class="tri none"></b><input type="checkbox" id="l3"><i class="swatch land"></i><label for="l3">Country boundaries</label></li>
            </ul>
          </div>
          <div class="hbar"><i class="left"></i><i class="thumb end"></i><i class="right"></i></div>
        </div>
      </section>
    </aside>

    <section class="canvas">
      <svg class="map" viewBox="287 144 1136 836" preserveAspectRatio="xMinYMin slice">
        <g class="pts">
          <circle class="p" cx="325" cy="620" r="5"/><circle class="p" cx="356" cy="622" r="5"/><circle class="l" cx="369" cy="622" r="5"/><circle class="g" cx="382" cy="633" r="5"/><circle class="p" cx="405" cy="628" r="5"/><circle class="r" cx="419" cy="621" r="5"/><circle class="g" cx="435" cy="619" r="5"/><circle class="p" cx="443" cy="626" r="5"/><circle class="g" cx="440" cy="625" r="5"/><circle class="r" cx="317" cy="640" r="5"/><circle class="p" cx="333" cy="635" r="5"/><circle class="p" cx="341" cy="639" r="5"/><circle class="g" cx="352" cy="654" r="5"/><circle class="p" cx="363" cy="652" r="5"/><circle class="p" cx="358" cy="660" r="5"/><circle class="p" cx="374" cy="653" r="5"/><circle class="l" cx="367" cy="651" r="5"/><circle class="p" cx="391" cy="662" r="5"/><circle class="g" cx="386" cy="669" r="5"/><circle class="y" cx="385" cy="661" r="5"/><circle class="p" cx="385" cy="667" r="5"/><circle class="g" cx="354" cy="676" r="5"/><circle class="g" cx="316" cy="675" r="5"/><circle class="b" cx="314" cy="680" r="5"/><circle class="p" cx="442" cy="647" r="5"/><circle class="g" cx="444" cy="646" r="5"/><circle class="p" cx="446" cy="672" r="5"/><circle class="p" cx="444" cy="676" r="5"/><circle class="p" cx="419" cy="688" r="5"/><circle class="p" cx="413" cy="699" r="5"/><circle class="p" cx="414" cy="695" r="5"/><circle class="g" cx="378" cy="703" r="5"/><circle class="p" cx="374" cy="702" r="5"/><circle class="p" cx="410" cy="722" r="5"/><circle class="g" cx="412" cy="733" r="5"/><circle class="r" cx="444" cy="736" r="5"/><circle class="g" cx="425" cy="753" r="5"/><circle class="p" cx="429" cy="747" r="5"/><circle class="p" cx="442" cy="753" r="5"/><circle class="p" cx="401" cy="757" r="5"/>
          <circle class="g" cx="1280" cy="503" r="5"/><circle class="p" cx="1279" cy="516" r="5"/><circle class="g" cx="1290" cy="522" r="5"/><circle class="p" cx="1290" cy="519" r="5"/><circle class="y" cx="1313" cy="564" r="5"/><circle class="y" cx="1327" cy="561" r="5"/><circle class="g" cx="1371" cy="578" r="5"/><circle class="p" cx="1299" cy="577" r="5"/><circle class="p" cx="1300" cy="572" r="5"/><circle class="p" cx="1279" cy="587" r="5"/><circle class="p" cx="1304" cy="598" r="5"/><circle class="p" cx="1291" cy="613" r="5"/><circle class="p" cx="1297" cy="613" r="5"/><circle class="y" cx="1298" cy="606" r="5"/><circle class="p" cx="1279" cy="613" r="5"/><circle class="y" cx="1343" cy="618" r="5"/><circle class="p" cx="1361" cy="622" r="5"/><circle class="b" cx="1304" cy="622" r="5"/><circle class="p" cx="1302" cy="622" r="5"/><circle class="p" cx="1288" cy="634" r="5"/><circle class="l" cx="1396" cy="640" r="5"/><circle class="l" cx="1394" cy="640" r="5"/><circle class="p" cx="1308" cy="657" r="5"/><circle class="p" cx="1304" cy="655" r="5"/><circle class="l" cx="1288" cy="663" r="5"/><circle class="p" cx="1307" cy="672" r="5"/><circle class="l" cx="1308" cy="667" r="5"/><circle class="g" cx="1293" cy="685" r="5"/><circle class="g" cx="1294" cy="681" r="5"/><circle class="g" cx="1312" cy="685" r="5"/><circle class="g" cx="1346" cy="692" r="5"/><circle class="p" cx="1346" cy="696" r="5"/><circle class="y" cx="1384" cy="702" r="5"/><circle class="g" cx="1369" cy="714" r="5"/><circle class="g" cx="1291" cy="705" r="5"/><circle class="g" cx="1284" cy="701" r="5"/><circle class="g" cx="1279" cy="710" r="5"/><circle class="l" cx="1318" cy="734" r="5"/><circle class="g" cx="1330" cy="736" r="5"/><circle class="g" cx="1323" cy="735" r="5"/><circle class="g" cx="1341" cy="737" r="5"/><circle class="p" cx="1290" cy="738" r="5"/>
        </g>
      </svg>
    </section>
  </main>

  <footer class="statusbar">
    <label class="field locate"><svg><use href="#search"/></svg><input type="text" placeholder="Type to locate (Ctrl+K)" aria-label="Locate"></label>
    <span class="st-toggle">Toggles</span>
    <label for="coord">Coordinate</label><input class="field coord" id="coord" type="text" value="-8.096,54.518">
    <svg class="st-icon"><use href="#extents"/></svg>
    <label for="scale">Scale</label><span class="field scale"><input id="scale" type="text" value="1:489337"><button class="pick"></button></span>
    <svg class="st-icon padlock"><use href="#lock"/></svg>
    <label for="mag">Magnifier</label><span class="field mag"><input id="mag" type="text" value="100%"><span class="spin"></span></span>
    <label for="rot">Rotation</label><span class="field rot"><input id="rot" type="text" value="0.0 °"><span class="spin"></span></span>
    <label class="render"><input type="checkbox" checked>Render</label>
    <button class="crs"><svg><use href="#crs"/></svg>EPSG:4326</button>
    <button class="messages"><svg><use href="#bubble"/></svg></button>
  </footer>
</div>

<section class="window">
  <header class="titlebar"><h1>waterbeetles_combined — Features Total: 5176, Filtered: 5176, Selected: 0</h1>
    <div class="winbtns"><svg viewBox="0 0 18 18"><circle cx="9" cy="9" r="8.500" fill="#f0ede9" stroke="#b5b0aa"/><path d="M5 9h8" stroke="#555" stroke-width="1.200"/></svg><svg viewBox="0 0 18 18"><circle cx="9" cy="9" r="8.500" fill="#f0ede9" stroke="#b5b0aa"/><path d="M5.500 5.500h7v7h-7z" fill="none" stroke="#555" stroke-width="1.200"/></svg><svg viewBox="0 0 18 18"><circle cx="9" cy="9" r="8.500" fill="url(#orange)" stroke="#cfa290"/><path d="M6 6l6 6M12 6l-6 6" stroke="#5a2410" stroke-width="1.200"/></svg></div>
  </header>
  <div class="wtools">
    <button class="on"><svg><use href="#pencil"/></svg></button><button><svg><use href="#multi"/></svg></button><button disabled><svg><use href="#save"/></svg></button><button disabled><svg><use href="#refresh"/></svg></button><i class="sep"></i>
    <button><svg><use href="#tabadd"/></svg></button><button disabled><svg><use href="#trash"/></svg></button><button disabled><svg><use href="#cut"/></svg></button><button disabled><svg><use href="#copy"/></svg></button><button><svg><use href="#paste"/></svg></button><i class="sep"></i>
    <button><svg><use href="#epssel"/></svg></button><button><svg><use href="#selall"/></svg></button><button><svg><use href="#invert"/></svg></button><button><svg><use href="#desel1"/></svg></button><button><svg><use href="#funnel"/></svg></button><button><svg><use href="#totop"/></svg></button><button><svg><use href="#pan"/></svg></button><button><svg><use href="#zsel"/></svg></button><i class="sep"></i>
    <button><svg><use href="#colnew"/></svg></button><button><svg><use href="#coldel"/></svg></button><button><svg><use href="#coledit"/></svg></button><button><svg><use href="#abacus"/></svg></button><i class="sep"></i>
    <button><svg><use href="#cond"/></svg></button><i class="sep"></i>
    <button><svg><use href="#dock"/></svg></button><button><svg><use href="#action"/></svg></button>
  </div>
  <div class="calc-row"><button class="fieldpick"><small>abc</small>W</button><button class="upd" disabled>Update Selected</button></div>
  <div class="wbody">
    <div class="wleft">
      <div class="exprow"><svg><use href="#epslens"/></svg>Expression</div>
      <ul class="features">
        <li class="selected"><label><input type="checkbox">A</label></li>
        <li><label><input type="checkbox">A</label></li><li><label><input type="checkbox">A</label></li><li><label><input type="checkbox">A</label></li><li><label><input type="checkbox">A</label></li><li><label><input type="checkbox">A</label></li><li><label><input type="checkbox">A</label></li><li><label><input type="checkbox">A</label></li><li><label><input type="checkbox">A</label></li><li><label><input type="checkbox">A</label></li><li><label><input type="checkbox">A</label></li><li><label><input type="checkbox">A</label></li><li><label><input type="checkbox">A</label></li><li><label><input type="checkbox">A</label></li><li><label><input type="checkbox">A</label></li><li><label><input type="checkbox">A</label></li><li><label><input type="checkbox">A</label></li><li><label><input type="checkbox">A</label></li><li><label><input type="checkbox">A</label></li><li><label><input type="checkbox">A</label></li><li><label><input type="checkbox">A</label></li><li><label><input type="checkbox">A</label></li><li><label><input type="checkbox">A</label></li><li><label><input type="checkbox">A</label></li><li><label><input type="checkbox">A</label></li><li><label><input type="checkbox">A</label></li><li><label><input type="checkbox">A</label></li><li><label><input type="checkbox">A</label></li>
      </ul>
      <div class="pager"><button><svg><use href="#first"/></svg></button><button><svg><use href="#prev"/></svg></button><button><svg><use href="#next"/></svg></button><button><svg><use href="#last"/></svg></button><span>1 / 5176</span><button class="on"><svg><use href="#bulb"/></svg></button><button class="wide"><svg><use href="#arrows"/></svg></button><button><svg><use href="#lens"/></svg></button></div>
    </div>
    <div class="wform">
      <div class="attrs">
        <div class="attr-head"></div>
        <div class="attr"><svg><use href="#clear"/></svg></div>
        <div class="attr"><svg><use href="#clear"/></svg><b class="cell"></b></div>
        <div class="attr"><svg><use href="#clear"/></svg><b class="cell spin"></b></div>
        <div class="attr"><svg><use href="#clear"/></svg></div>
        <div class="attr"></div>
        <div class="attr"><svg><use href="#clear"/></svg></div>
        <div class="attr"><svg><use href="#clear"/></svg></div>
        <div class="attr"><svg><use href="#clear"/></svg></div>
      </div>
      <div class="hbar wide"><i class="left"></i><i class="thumb"></i><i class="right"></i></div>
    </div>
  </div>
  <div class="wfoot"><button class="filter"><svg><use href="#funnel"/></svg>Show All Features<b></b></button><button class="view on"><svg><use href="#form"/></svg></button><button class="view"><svg><use href="#table"/></svg></button></div>
</section>

<section class="dialog" role="dialog" aria-labelledby="dlg-title">
  <header class="titlebar"><h1 id="dlg-title">waterbeetles_combined — Field Calculator</h1>
    <div class="winbtns"><svg viewBox="0 0 18 18"><circle cx="9" cy="9" r="8.500" fill="url(#orange)" stroke="#e8b4a0"/><path d="M6 6l6 6M12 6l-6 6" stroke="#5a2410" stroke-width="1.200"/></svg></div>
  </header>
  <form class="dbody">
    <label class="check off"><input type="checkbox" disabled>Only update 0 selected features</label>
    <div class="groups">
      <section class="group">
        <label class="check strong"><input type="checkbox" checked>Create a new field</label>
        <div class="box fields">
          <label class="check full"><input type="checkbox">Create virtual field</label>
          <label for="fn">Output field name</label><input class="field" id="fn" type="text" value="Year">
          <label for="ft">Output field type</label><select class="field" id="ft"><option>Whole number (integer)</option></select>
          <label for="fl">Output field length</label>
          <div class="lens"><span class="field len"><input id="fl" type="text" value="10"><span class="spin"></span></span><label for="fp">Precision</label><span class="field prec off"><input id="fp" type="text" value="3" disabled><span class="spin"></span></span></div>
        </div>
      </section>
      <section class="group second">
        <label class="check strong"><input type="checkbox">Update existing field</label>
        <div class="box single"><select class="field off" aria-label="Existing field" disabled><option></option></select></div>
      </section>
    </div>
    <div class="tabs"><button type="button" class="tab on">Expression</button><button type="button" class="tab">Function Editor</button></div>
    <div class="page">
      <div class="editor">
        <div class="btns"><button type="button" disabled><svg><use href="#page"/></svg></button><button type="button" disabled><svg><use href="#save"/></svg></button><button type="button" disabled><svg><use href="#pageedit"/></svg></button><button type="button" disabled><svg><use href="#trash"/></svg></button><button type="button"><svg><use href="#import"/></svg></button><button type="button"><svg><use href="#export"/></svg></button></div>
        <textarea aria-label="Expression"></textarea>
        <div class="ops"><button type="button">=</button><button type="button">+</button><button type="button">-</button><button type="button">/</button><button type="button">*</button><button type="button">^</button><button type="button">||</button><button type="button">(</button><button type="button">)</button><button type="button">\n'</button></div>
        <div class="feature"><label for="feat">Feature</label><span class="field"><input id="feat" type="text" value="ustulatus"><button type="button" class="pick"></button></span><button type="button" disabled><svg><use href="#prev"/></svg></button><button type="button"><svg><use href="#next"/></svg></button></div>
        <div class="preview">Preview:</div>
      </div>
      <i class="split-v"></i>
      <div class="funcs">
        <div class="fsearch"><label class="field"><svg><use href="#search"/></svg><input type="text" placeholder="Se…" aria-label="Search"></label><button type="button" disabled>Show Help</button></div>
        <div class="pane-row fpane">
          <ul class="ftree">
            <li class="cat"><b class="tri"></b><span>Color</span></li>
            <li class="cat"><b class="tri"></b><span>Conditionals</span></li>
            <li class="cat"><b class="tri"></b><span>Conversions</span></li>
            <li class="cat"><b class="tri open"></b><span>Date and Time</span></li>
            <li>age</li><li>datetime_…</li><li>day</li><li>day_of_we…</li><li>epoch</li><li>format_date</li><li>hour</li><li>make_date</li><li>make_dat…</li><li>make_inte…</li><li>make_time</li>
          </ul>
          <div class="vbar"><i class="up"></i><i class="thumb func-thumb"></i><i class="down"></i></div>
          <svg class="pointer" viewBox="0 0 14 20"><path d="M1 1v15l4-3 3 6 3-1-3-6h5z" fill="#fff" stroke="#111" stroke-width="1.300"/></svg>
        </div>
      </div>
      <i class="split-v near"></i>
      <div class="helpbox"></div>
    </div>
    <div class="actions"><button type="button" class="help"><svg><use href="#helpq"/></svg>Help</button><button type="button" class="cancel"><svg><use href="#cross"/></svg><span><u>C</u>ancel</span></button><button type="button" class="okay" disabled><svg><use href="#ok"/></svg><span><u>O</u>K</span></button></div>
  </form>
</section>
</body>
</html>
```
FILE: styles.css
```css
* { box-sizing: border-box; }
body { margin: 0; height: 100vh; overflow: hidden; position: relative; background: #eeeae7; color: #0a0a0a; font: 17px/23px "Noto Sans", sans-serif; }
button, input, select, textarea { font: inherit; color: inherit; margin: 0; padding: 0; border: 0; background: none; }
h1, h2, ul { margin: 0; padding: 0; font-size: 17px; }
h2 { font-weight: 400; }
li { list-style: none; }
svg { display: block; flex: none; overflow: visible; }
u { text-decoration-thickness: 2px; text-underline-offset: 3px; }
.sprite { display: none; }
.paints { position: absolute; width: 0; height: 0; }
::placeholder { color: #808080; opacity: 1; }

.app { height: 100%; display: flex; flex-direction: column; }
.menubar { height: 26px; flex: none; display: flex; gap: 17px; padding: 0 11px; border-bottom: 1px solid #d3d0cc; }
.menubar button { line-height: 24px; height: 24px; white-space: nowrap; }

.toolbar { height: 39px; flex: none; display: flex; align-items: center; padding-left: 3px; border-bottom: 1px solid #b5b2ae; background: linear-gradient(#f7f4f1, #ebe8e4); }
.grip { flex: none; width: 5px; height: 19px; margin: 0 8px 0 5px; background: radial-gradient(circle, #b8b4b0 35%, transparent 45%) 0 0 / 3px 3px; }
.toolbar .grip:first-child { margin: 0 5px 0 2px; }
.sep { flex: none; width: 1px; height: 20px; margin: 0 3px 0 4px; background: #ccc8c4; }
.tool { width: 33px; height: 32px; display: flex; align-items: center; justify-content: center; border: 1px solid transparent; border-radius: 3px; }
.tool svg { width: 23px; height: 23px; }
.tool.on { background: #d9d6d3; border-color: #a9a6a2; }
button:disabled > svg { opacity: .35; filter: grayscale(1); }
.drop { width: 15px; height: 20px; display: flex; align-items: center; justify-content: center; }
.drop::before { content: ""; border: 5px solid transparent; border-top-color: #444; border-bottom: 0; }

.workspace { flex: 1; min-height: 0; display: flex; }
.docks { width: 279px; flex: none; display: flex; flex-direction: column; }
.dock { display: flex; flex-direction: column; min-height: 0; }
.browser { flex: 0 1 430px; }
.layers { flex: 1; }
.split-h { height: 7px; flex: none; }
.split-h::before { content: ""; display: block; width: 17px; height: 1px; margin: 3px auto; border-top: 1px dotted #999; }
.dock-title { height: 23px; flex: none; display: flex; align-items: center; gap: 2px; padding: 0 1px 0 4px; }
.dock-title h2 { flex: 1; }
.dock-title svg { width: 12px; height: 12px; }
.dock-tools { height: 31px; flex: none; display: flex; align-items: center; padding: 0 0 2px 3px; }
.dock-tools button { width: 25px; display: flex; justify-content: center; }
.dock-tools svg { width: 16px; height: 16px; }
.dock-tools .drop { width: 15px; }
.pane { flex: 1; min-height: 0; display: flex; flex-direction: column; background: #fff; border: 1px solid #b6b2ae; }
.pane-row { flex: 1; min-height: 0; display: flex; }
.tree, .layer-list, .ftree { flex: 1; min-width: 0; overflow: hidden; }
.tree li { height: 23px; display: flex; align-items: center; white-space: nowrap; }
.tree li svg { width: 20px; height: 20px; margin: 0 6px 0 0; }
.tri { flex: none; width: 5px; height: 10px; margin: 0 12px 0 7px; border: 5px solid transparent; border-left: 6px solid #444; border-right: 0; }
.tri.none { border-color: transparent; }
.layer-list li { height: 23px; display: flex; align-items: center; white-space: nowrap; color: #808080; font-weight: 700; font-style: italic; }
.layer-list li.selected { background: #308cc6; color: #fff; font-style: normal; }
.layer-list .selected .tri { border-left-color: #112; }
.layer-list .tri { margin: 0 12px 0 10px; }
.layer-list svg { width: 18px; height: 16px; margin: 0 5px 0 5px; }
.swatch { width: 18px; height: 18px; margin: 0 7px 0 6px; }
.lakes { background: #73a9e6; border: 1px solid #4a8ad4; }
.land { background: #ffffd4; border: 1px solid #f4f08c; }

.vbar { width: 18px; flex: none; display: flex; flex-direction: column; border-left: 1px solid #b6b2ae; background: #e1e0dd; }
.hbar { height: 17px; flex: none; display: flex; border-top: 1px solid #b6b2ae; background: #e1e0dd; }
.up, .down { height: 17px; flex: none; display: flex; align-items: center; justify-content: center; background: #f9f8f7; border-bottom: 1px solid #b6b2ae; }
.down { border: 0; border-top: 1px solid #b6b2ae; margin-top: auto; }
.up::before, .down::before { content: ""; border: 4px solid transparent; }
.up::before { border-bottom: 5px solid #555; border-top: 0; }
.down::before { border-top: 5px solid #555; border-bottom: 0; }
.left, .right { width: 17px; flex: none; display: flex; align-items: center; justify-content: center; background: #f9f8f7; border-right: 1px solid #b6b2ae; }
.right { border: 0; border-left: 1px solid #b6b2ae; }
.left::before, .right::before { content: ""; border: 4px solid transparent; }
.left::before { border-right: 5px solid #444; border-left: 0; }
.right::before { border-left: 5px solid #444; border-right: 0; }
.hbar .thumb { flex: 1; margin-left: 2px; background: linear-gradient(#fafafa, #eceae8); border-left: 1px solid #b6b2ae; }
.hbar .thumb.end { margin: 0 4px 0 0; border-left: 0; border-right: 1px solid #b6b2ae; }
.vbar .thumb { background: linear-gradient(90deg, #fdfdfd, #eceae8); border: solid #b6b2ae; border-width: 1px 0; }
.browser-thumb { margin-top: 16px; flex: 0 0 257px; }
.with-corner { padding-right: 17px; background: #eeeae7; }
.with-corner .right { border-right: 1px solid #b6b2ae; width: 18px; }

.canvas { flex: 1; min-width: 0; margin: 0 0 0 7px; background: #fff; border: 1px solid #b6b2ae; overflow: hidden; }
.map { width: 100%; height: 100%; }
.pts circle { stroke: #46ae6c; stroke-width: 1; }
.p { fill: #d858c0; } .g { fill: #54d66c; } .l { fill: #a2e68a; } .r { fill: #d83a7c; } .y { fill: #e6d25a; } .b { fill: #4818f0; }

.statusbar { height: 36px; flex: none; display: flex; align-items: center; padding: 0 0 0 4px; font-size: 14px; white-space: nowrap; }
.field { display: flex; align-items: center; background: #fff; border: 1px solid #b0aca8; border-radius: 3px; height: 29px; }
.field input { flex: 1; min-width: 0; width: 0; height: 100%; }
.locate { width: 327px; font-size: 17px; padding-left: 7px; gap: 7px; }
.locate svg { width: 14px; height: 14px; }
.st-toggle { margin: 0 9px 0 8px; }
.coord { width: 104px; height: 26px; margin-left: 4px; padding: 0 4px; }
.st-icon { width: 20px; height: 20px; margin: 0 14px 0 4px; }
.scale { width: 116px; margin: 0 6px 0 4px; padding-left: 3px; }
.padlock { margin-right: 5px; }
.mag { width: 106px; margin: 0 9px 0 5px; padding-left: 4px; }
.rot { width: 102px; margin: 0 7px 0 12px; padding-left: 4px; }
.pick { width: 20px; height: 100%; border-left: 1px solid #b0aca8; display: flex; align-items: center; justify-content: center; }
.pick::before { content: ""; border: 4px solid transparent; border-top: 5px solid #555; border-bottom: 0; }
.spin { width: 17px; height: 100%; flex: none; border-left: 1px solid #b0aca8; display: flex; flex-direction: column; align-items: center; justify-content: center; gap: 8px; background: #f8f7f6; }
.spin::before, .spin::after { content: ""; border: 4px solid transparent; }
.spin::before { border-top: 0; border-bottom: 4px solid #444; }
.spin::after { border-bottom: 0; border-top: 4px solid #444; }
.render { display: flex; align-items: center; gap: 6px; margin-right: 18px; }
.crs { display: flex; align-items: center; gap: 4px; margin-right: 22px; }
.crs svg, .messages svg { width: 20px; height: 20px; }

input[type="checkbox"] { appearance: none; flex: none; width: 17px; height: 17px; background: #fff; border: 1px solid #b6b2ae; }
input[type="checkbox"]:checked { background: #fff url("data:image/svg+xml,%3Csvg xmlns='http://www.w3.org/2000/svg' viewBox='0 0 15 15'%3E%3Cpath d='M3 7l3 5L11 2' fill='none' stroke='%23000' stroke-width='2'/%3E%3C/svg%3E"); }
input[type="checkbox"]:disabled { background: #eeeae7; }

.titlebar { height: 30px; flex: none; display: flex; align-items: center; justify-content: center; position: relative; border-radius: 8px 8px 0 0; background: linear-gradient(#faf8f6, #e0dad5); border-bottom: 1px solid #d8d2cd; color: #5a544e; }
.titlebar h1 { font-weight: 700; white-space: nowrap; }
.winbtns { position: absolute; right: 5px; display: flex; gap: 2px; }
.winbtns svg { width: 18px; height: 18px; }

.window { position: absolute; left: 450px; top: 98px; width: 829px; height: 848px; display: flex; flex-direction: column; background: #eeeae7; border-radius: 8px 8px 0 0; box-shadow: 0 4px 20px rgba(0, 0, 0, .6); border: 1px solid #b4b1ae; border-top: 0; }
.window::after { content: ""; position: absolute; inset: 0 -1px -1px; background: rgba(0, 0, 0, .305); border-radius: 8px 8px 0 0; pointer-events: none; }
.wtools { height: 31px; flex: none; display: flex; align-items: center; padding: 0 0 1px 2px; }
.wtools button { width: 25px; height: 24px; display: flex; align-items: center; justify-content: center; border: 1px solid transparent; border-radius: 3px; }
.wtools button.on, .pager .on, .view.on { background: #dbd8d5; border: 1px solid #a5a29e; border-radius: 3px; }
.wtools svg { width: 16px; height: 16px; }
.calc-row { height: 33px; flex: none; display: flex; justify-content: space-between; align-items: flex-start; padding: 1px 0 0 2px; }
.calc-row button { height: 28px; border: 1px solid #a5a29e; border-radius: 3px; background: linear-gradient(#fff, #eceae8); }
.fieldpick { width: 100px; display: flex; align-items: center; gap: 4px; padding-left: 6px; }
.fieldpick small { font-size: 12px; font-weight: 600; color: #444; }
.upd { width: 160px; text-align: right; padding-right: 8px; color: #b8b4b0; }
.wbody { flex: 1; min-height: 0; display: flex; }
.wleft { width: 263px; flex: none; display: flex; flex-direction: column; }
.exprow { height: 30px; flex: none; display: flex; align-items: center; gap: 5px; padding: 0 0 3px 6px; }
.exprow svg { width: 18px; height: 18px; }
.features { flex: 1; min-height: 0; overflow: hidden; background: #fff; border: 1px solid #b6b2ae; }
.features li { height: 24px; padding-left: 4px; }
.features label { display: flex; align-items: center; height: 24px; gap: 9px; }
.features input[type="checkbox"] { width: 13px; height: 13px; border-color: #888; margin-bottom: 4px; }
.features .selected { background: #308cc6; color: #fff; }
.pager { height: 29px; flex: none; display: flex; align-items: center; }
.pager button { width: 25px; height: 26px; display: flex; align-items: center; justify-content: center; }
.pager svg { width: 19px; height: 19px; }
.pager button.on { width: 28px; margin-right: 3px; }
.pager .wide { width: 32px; }
.pager span { width: 66px; font-size: 17px; white-space: nowrap; }
.wform { flex: 1; display: flex; flex-direction: column; border: 2px solid #b3b0ad; border-top: 0; }
.attrs { flex: 1; min-height: 0; border-top: 2px solid #b3b0ad; }
.attr-head { height: 23px; border-bottom: 1px solid #b3b0ad; }
.attr { height: 28px; margin-bottom: 8px; display: flex; align-items: center; justify-content: flex-end; gap: 8px; padding-right: 1px; border: solid #b3b0ad; border-width: 1px 0; background: #fff; }
.attr:has(.cell) { padding: 0; }
.attr svg { width: 14px; height: 12px; }
.cell { width: 13px; height: 100%; border-left: 1px solid #b3b0ad; display: flex; align-items: center; justify-content: center; }
.cell:not(.spin)::before { content: ""; border: 4px solid transparent; border-top: 5px solid #333; border-bottom: 0; }
.wform .hbar .thumb { margin: 0 41px 0 0; border: 0; border-right: 1px solid #b3b0ad; }
.wfoot { height: 33px; flex: none; display: flex; align-items: flex-start; padding: 3px 2px 0 2px; }
.wfoot .filter { width: 187px; height: 28px; margin-right: auto; display: flex; align-items: center; gap: 5px; padding-left: 4px; border: 1px solid #a5a29e; border-radius: 3px; background: linear-gradient(#fff, #eceae8); white-space: nowrap; position: relative; }
.filter svg { width: 19px; height: 19px; }
.filter b { position: absolute; right: 1px; bottom: 4px; border: 4px solid transparent; border-top: 5px solid #333; border-bottom: 0; }
.view { width: 28px; height: 27px; display: flex; align-items: center; justify-content: center; }
.view svg { width: 18px; height: 18px; }

.dialog { position: absolute; left: 487px; top: 159px; width: 754px; height: 727px; display: flex; flex-direction: column; background: #eeeae7; border-radius: 8px 8px 0 0; box-shadow: 0 2px 14px rgba(0, 0, 0, .25); }
.dbody { flex: 1; min-height: 0; display: flex; flex-direction: column; padding: 14px 13px 13px; }
.check { display: flex; align-items: center; gap: 6px; height: 24px; white-space: nowrap; }
.check.strong { gap: 7px; font-weight: 700; padding-left: 1px; }
.off { color: #bab6b2; }
.groups { display: flex; gap: 8px; padding-top: 9px; }
.group { flex: 456; min-width: 0; display: flex; flex-direction: column; }
.group.second { flex: 263; }
.box { flex: 1; border: 1px solid #d8d4d0; border-radius: 3px; margin-top: 1px; background: #ebe8e5; }
.group .field { width: 100%; }
.fields { display: grid; grid-template-columns: 166px 1fr; grid-auto-rows: 29px; row-gap: 3px; padding: 8px 6px 2px 5px; align-items: center; white-space: nowrap; }
.fields .full { grid-column: 1 / -1; height: 28px; }
.fields > .check { gap: 6px; }
input.field { padding: 0 3px; }
select.field { appearance: none; padding: 0 5px; background: url("data:image/svg+xml,%3Csvg xmlns='http://www.w3.org/2000/svg' viewBox='0 0 8 5'%3E%3Cpath d='M0 0h8L4 5z' fill='%23555'/%3E%3C/svg%3E") right 6px center / 8px 5px no-repeat, linear-gradient(#fdfdfd, #f0eeec); }
select.off { opacity: .6; background: linear-gradient(#fdfdfd, #f0eeec); }
.lens { display: flex; align-items: center; }
.lens .field { height: 28px; padding-left: 5px; }
.lens .field.len { width: 88px; margin-right: 7px; }
.lens label { flex: 1; }
.lens .field.prec { width: 88px; background: #e8e5e2; }
.prec .spin { opacity: .3; }
.single { padding: 57px 5px 0 4px; }
.tabs { display: flex; align-items: flex-end; height: 42px; border-bottom: 1px solid #c2bebb; }
.tab { height: 33px; padding: 0 14px; border: 1px solid #c2bebb; border-bottom: 0; border-radius: 3px 3px 0 0; background: #e8e5e2; white-space: nowrap; }
.tab.on { height: 35px; padding: 0 13px; width: 120px; background: linear-gradient(#fff, #f6f4f2); margin-bottom: -1px; }
.tab:not(.on) { width: 154px; border-left: 0; }
.page { flex: 1; min-height: 0; display: flex; padding: 11px 11px 0; margin-bottom: 47px; }
.editor { width: 244px; flex: none; display: flex; flex-direction: column; }
.btns { display: flex; gap: 2px; }
.btns button, .feature > button, .ops button, .fsearch button, .actions button { height: 28px; border: 1px solid #b3afab; border-radius: 3px; background: linear-gradient(#fefefe, #f1efed); display: flex; align-items: center; justify-content: center; }
.page button:disabled, .actions button:disabled { border-color: #cecac6; color: #bcb8b4; background: #f3f1ef; }
.btns button { width: 28px; }
.btns svg { width: 20px; height: 20px; }
textarea { display: block; flex: 0 0 208px; margin: 7px 0; background: #fff; border: 1px solid #b6b2ae; resize: none; }
.ops { display: flex; gap: 2px; font-size: 16px; }
.ops button { flex: 1 1 0; min-width: 0; height: 30px; white-space: nowrap; }
.feature { display: flex; align-items: center; margin-top: 10px; gap: 7px; }
.feature label { flex: none; width: 64px; }
.feature > .field { width: 103px; flex: none; padding-left: 3px; }
.feature > button { width: 28px; }
.feature svg { width: 20px; height: 20px; }
.preview { margin-top: 6px; }
.split-v { width: 26px; flex: none; display: flex; align-items: center; justify-content: center; }
.split-v::before { content: ""; height: 16px; border-left: 1px dotted #999; }
.near { width: 14px; justify-content: flex-start; padding-left: 3px; }
.funcs { flex: none; width: 181px; display: flex; flex-direction: column; }
.fsearch { display: flex; gap: 7px; margin-bottom: 7px; }
.fsearch .field { width: 78px; padding-left: 7px; gap: 7px; }
.fsearch .field svg { width: 14px; height: 14px; }
.fsearch button { flex: 1; height: 30px; white-space: nowrap; }
.fpane { flex: 1; background: #fff; border: 1px solid #b6b2ae; position: relative; }
.ftree li { height: 21px; line-height: 21px; padding-left: 53px; white-space: nowrap; }
.ftree .cat { display: flex; align-items: center; padding: 0; }
.ftree .cat .tri { margin: 0 9px 0 10px; }
.ftree .cat span { flex: 1; background: #c0c0c0; padding-left: 3px; }
.tri.open { width: 10px; height: 6px; border: 5px solid transparent; border-top: 6px solid #444; border-bottom: 0; }
.ftree .cat .tri.open { margin: 0 7px 0 8px; }
.func-thumb { margin-top: 20px; flex: 0 0 93px; }
.pointer { position: absolute; left: 10px; top: 72px; width: 14px; height: 20px; }
.helpbox { flex: 1; background: #fff; border: 1px solid #b6b2ae; }
.actions { display: flex; gap: 7px; }
.actions .help { margin-right: auto; width: 80px; }
.actions .cancel { width: 88px; }
.actions .okay { width: 80px; }
.actions svg { width: 20px; height: 20px; }
```
